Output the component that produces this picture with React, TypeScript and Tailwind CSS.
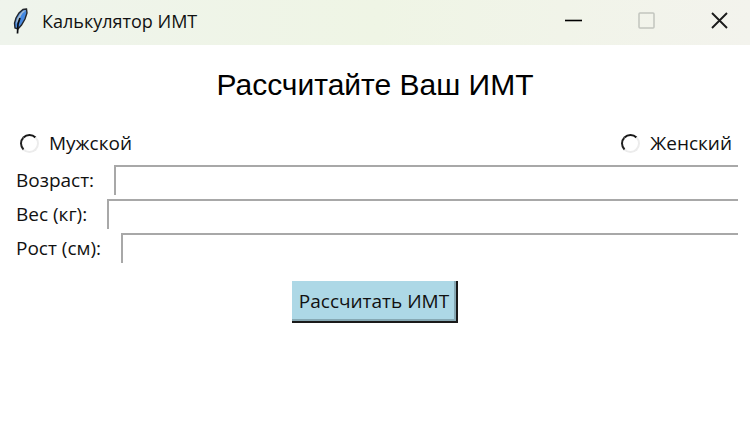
import React, { useState } from "react";

const fields = [
  { id: "age", label: "Возраст:" },
  { id: "weight", label: "Вес (кг):" },
  { id: "height", label: "Рост (см):" },
];

function FeatherIcon() {
  return (
    <svg viewBox="0 0 16 28" className="h-7 w-4" aria-hidden="true">
      <path d="M14.500 2 L11 2.500 L7 6 L4 11 L2.500 16 L3 21 L6 22 L9.500 18 L13 12 L15 6 Z" fill="#4a8ade" stroke="#23262b" strokeWidth="1.400" />
      <path d="M14 3 L11 4 L8 7 L5 12 L4 17 L7 13 L10 7 Z" fill="#a9bccd" />
      <path d="M12 6 L8 13 L6 19" fill="none" stroke="#4189e6" strokeWidth="2" />
      <path d="M8 11 L6 17 L5.500 26.500" fill="none" stroke="#0b0d12" strokeWidth="1.700" />
    </svg>
  );
}

interface GenderOptionProps {
  value: string;
  label: string;
  selected: string;
  onSelect: (value: string) => void;
}

function GenderOption({ value, label, selected, onSelect }: GenderOptionProps) {
  return (
    <label className="flex items-center gap-2.5">
      <input
        type="radio"
        name="gender"
        value={value}
        checked={selected === value}
        onChange={() => onSelect(value)}
        className="size-[19px] appearance-none rounded-full border-2 border-t-[#161616] border-r-[#ececec] border-b-[#ececec] border-l-[#202020] bg-white checked:bg-black checked:bg-clip-content checked:p-1"
      />
      {label}
    </label>
  );
}

export default function App() {
  const [gender, setGender] = useState("");

  return (
    <div className="min-h-screen bg-white font-['Open_Sans','Noto_Sans',sans-serif] text-[19px] leading-6 text-[#111111]">
      {/* Title bar */}
      <header className="flex h-[45px] items-center bg-linear-to-r from-[#eff4ec] via-[#eff5e5] to-[#f3f3ed] pb-1 pl-3">
        <FeatherIcon />
        <h1 className="ml-3.5 flex-1 text-lg leading-6">Калькулятор ИМТ</h1>
        <div className="flex items-center gap-14 pr-[22px]">
          <button type="button" aria-label="Свернуть">
            <svg viewBox="0 0 17 17" className="size-[17px]">
              <path d="M0 8.500 H17" stroke="#000" strokeWidth="1.600" />
            </svg>
          </button>
          <button type="button" aria-label="Развернуть" disabled>
            <svg viewBox="0 0 17 17" className="size-[17px]">
              <rect x="1" y="1" width="15" height="15" rx="1" fill="none" stroke="#c2c5bf" strokeWidth="1.500" />
            </svg>
          </button>
          <button type="button" aria-label="Закрыть">
            <svg viewBox="0 0 17 17" className="size-[17px]">
              <path d="M1 1 L16 16 M16 1 L1 16" stroke="#1b1b1b" strokeWidth="1.900" />
            </svg>
          </button>
        </div>
      </header>

      <main className="px-3">
        <h2 className="pt-[22px] text-center font-['Liberation_Sans',sans-serif] text-3xl text-black">
          Рассчитайте Ваш ИМТ
        </h2>

        {/* Gender */}
        <div className="mt-7 flex justify-between pr-1.5 pl-2">
          <GenderOption value="male" label="Мужской" selected={gender} onSelect={setGender} />
          <GenderOption value="female" label="Женский" selected={gender} onSelect={setGender} />
        </div>

        {/* Measurements */}
        <div className="mt-2.5 flex flex-col gap-1">
          {fields.map((field) => (
            <div key={field.id} className="flex items-center gap-5 pl-1">
              <label htmlFor={field.id}>{field.label}</label>
              <input
                id={field.id}
                type="text"
                className="h-[30px] min-w-0 flex-1 border-t-2 border-l-2 border-[#a8a8a8] px-1 outline-none"
              />
            </div>
          ))}
        </div>

        <div className="mt-[18px] flex justify-center">
          <button
            type="button"
            className="border-r-2 border-b-2 border-[#1a1a1a] bg-[#add8e6] px-[7px] py-2 shadow-[inset_-2px_-2px_0_#86a8b3]"
          >
            Рассчитать ИМТ
          </button>
        </div>
      </main>
    </div>
  );
}
